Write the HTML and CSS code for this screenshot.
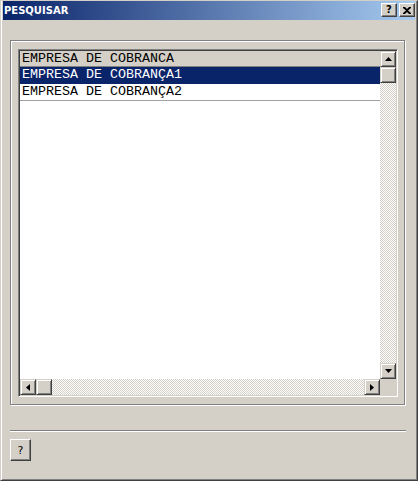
FILE: index.html
```html
<!DOCTYPE html>
<html>
<head>
<meta charset="utf-8">
<link rel="stylesheet" href="styles.css">
</head>
<body>
<div class="window">
  <div class="titlebar">
    <span class="title">PESQUISAR</span>
    <div class="tbtns">
      <div class="tbtn help-t">?</div>
      <div class="tbtn close">
        <svg width="8" height="7" viewBox="0 0 8 7"><path d="M0 0h2l2 2 2-2h2v1L5 3.5 8 6v1H6L4 5 2 7H0V6l3-2.5L0 1z" fill="#000"/></svg>
      </div>
    </div>
  </div>
  <div class="content">
    <div class="group">
      <div class="list">
        <div class="rows">
          <div class="row head">EMPRESA DE COBRANCA</div>
          <div class="row sel">EMPRESA DE COBRANÇA1</div>
          <div class="row">EMPRESA DE COBRANÇA2</div>
        </div>
        <div class="vscroll">
          <div class="sbtn"><svg width="7" height="4" viewBox="0 0 7 4"><path d="M3.5 0L7 4H0z" fill="#000"/></svg></div>
          <div class="sbtn"></div>
          <div class="track"></div>
          <div class="sbtn"><svg width="7" height="4" viewBox="0 0 7 4"><path d="M0 0h7L3.5 4z" fill="#000"/></svg></div>
        </div>
        <div class="hscroll">
          <div class="sbtn"><svg width="4" height="7" viewBox="0 0 4 7"><path d="M4 0v7L0 3.5z" fill="#000"/></svg></div>
          <div class="sbtn"></div>
          <div class="track"></div>
          <div class="sbtn"><svg width="4" height="7" viewBox="0 0 4 7"><path d="M0 0l4 3.5L0 7z" fill="#000"/></svg></div>
        </div>
        <div class="corner"></div>
      </div>
    </div>
    <div class="sep"></div>
    <div class="footer">
      <div class="helpbtn">?</div>
    </div>
  </div>
</div>
</body>
</html>
```
FILE: styles.css
```css
html, body {
  margin: 0;
  padding: 0;
  background: #d4d0c8;
}
.window {
  width: 418px;
  height: 481px;
  box-sizing: border-box;
  background: #d4d0c8;
  border: 1px solid;
  border-color: #d4d0c8 #404040 #404040 #d4d0c8;
  border-top: 1px solid #d4d0c8;
  display: flex;
  flex-direction: column;
}
.window > * {
  margin-left: 1px;
  margin-right: 1px;
}
.window {
  box-shadow: inset 1px 0 #fff, inset -1px -1px #808080;
}
.titlebar {
  margin-left: 2px;
  margin-right: 2px;
  height: 19px;
  background: linear-gradient(to right, #0a246a, #a6caf0);
  display: flex;
  align-items: flex-start;
  justify-content: space-between;
}
.title {
  font-family: "DejaVu Sans", sans-serif;
  font-weight: bold;
  font-size: 10px;
  color: #fff;
  line-height: 19px;
  padding-left: 1px;
}
.tbtns {
  display: flex;
  gap: 2px;
  margin-top: 2px;
  margin-right: 0px;
}
.tbtn {
  width: 16px;
  height: 14px;
  box-sizing: border-box;
  background: #d4d0c8;
  border: 1px solid;
  border-color: #fff #404040 #404040 #fff;
  box-shadow: inset -1px -1px #808080;
  display: flex;
  align-items: center;
  justify-content: center;
  font-family: "DejaVu Sans", sans-serif;
  font-weight: bold;
  font-size: 10px;
  line-height: 10px;
  color: #000;
}
.content {
  flex: 1;
  padding: 20px 8px 0 8px;
}
.group {
  width: 395px;
  height: 365px;
  box-sizing: border-box;
  border: 1px solid #808080;
  box-shadow: inset 1px 1px #fff, 1px 1px #fff;
  padding: 8px 6px 7px 7px;
}
.list {
  width: 380px;
  height: 348px;
  box-sizing: border-box;
  border: 1px solid;
  border-color: #808080 #fff #fff #808080;
  box-shadow: inset 1px 1px #404040, inset -1px -1px #d4d0c8;
  padding: 1px;
  display: grid;
  grid-template-columns: 360px 16px;
  grid-template-rows: 328px 16px;
  background: #fff;
}
.rows {
  background: #fff;
  overflow: hidden;
}
.row {
  font-family: "Liberation Mono", "Courier New", monospace;
  font-size: 13.33px;
  color: #000;
  height: 16px;
  line-height: 16px;
  padding-left: 2px;
  border-bottom: 1px solid #a0a0a0;
  white-space: nowrap;
}
.row.head {
  height: 15px;
  line-height: 15px;
  background: #d4d0c8;
  border-bottom-color: #808080;
}
.row.sel {
  background: #0a246a;
  color: #fff;
  border-bottom-color: #0a246a;
}
.vscroll {
  display: flex;
  flex-direction: column;
}
.hscroll {
  display: flex;
}
.sbtn {
  width: 16px;
  height: 16px;
  flex: none;
  box-sizing: border-box;
  background: #d4d0c8;
  border: 1px solid;
  border-color: #d4d0c8 #404040 #404040 #d4d0c8;
  box-shadow: inset 1px 1px #fff, inset -1px -1px #808080;
  display: flex;
  align-items: center;
  justify-content: center;
}
.track {
  flex: 1;
  background: repeating-conic-gradient(#d4d0c8 0 25%, #fff 0 50%) 0 0 / 2px 2px;
}
.corner {
  background: #d4d0c8;
}
.sep {
  width: 396px;
  height: 0;
  margin-top: 25px;
  border-top: 1px solid #808080;
  border-bottom: 1px solid #fff;
}
.footer {
  padding-top: 7px;
  display: flex;
}
.helpbtn {
  width: 21px;
  height: 22px;
  box-sizing: border-box;
  border: 1px solid;
  border-color: #fff #404040 #404040 #fff;
  box-shadow: inset -1px -1px #808080;
  display: flex;
  align-items: center;
  justify-content: center;
  font-family: "DejaVu Sans", sans-serif;
  font-size: 11px;
  color: #000;
}
```
